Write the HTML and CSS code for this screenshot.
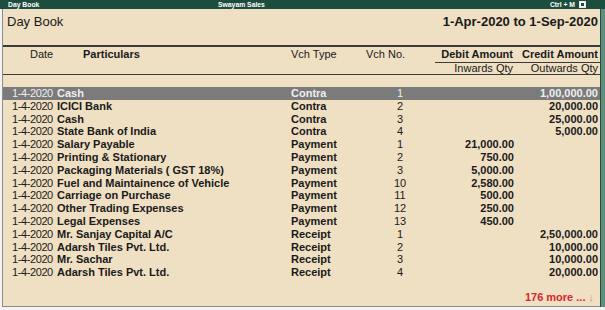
FILE: index.html
```html
<!DOCTYPE html>
<html>
<head>
<meta charset="utf-8">
<link rel="stylesheet" href="styles.css">
</head>
<body>
<div class="titlebar">
  <span class="tb-left">Day Book</span>
  <span class="tb-center">Swayam Sales</span>
  <span class="tb-fill"></span>
  <span class="tb-right">Ctrl + M <span class="tb-box"></span></span>
</div>
<div class="main">
  <div class="panel">
    <div class="heading">
      <span class="h-title">Day Book</span>
      <span class="h-period">1-Apr-2020 to 1-Sep-2020</span>
    </div>
    <div class="colhead">
      <div class="ch ch-date">Date</div>
      <div class="ch ch-part">Particulars</div>
      <div class="ch ch-type">Vch Type</div>
      <div class="ch ch-no">Vch No.</div>
      <div class="ch ch-amt ch-dr">Debit Amount</div>
      <div class="ch ch-amt ch-cr">Credit Amount</div>
      <div class="ch2"></div>
      <div class="ch2"></div>
      <div class="ch2"></div>
      <div class="ch2"></div>
      <div class="ch2 ch2-line ch-dr">Inwards Qty</div>
      <div class="ch2 ch2-line ch-cr">Outwards Qty</div>
    </div>
    <div class="rows">
      <div class="row sel"><span class="c-date">1-4-2020</span><span class="c-part">Cash</span><span class="c-type">Contra</span><span class="c-no">1</span><span class="c-dr"></span><span class="c-cr">1,00,000.00</span></div>
      <div class="row"><span class="c-date">1-4-2020</span><span class="c-part">ICICI Bank</span><span class="c-type">Contra</span><span class="c-no">2</span><span class="c-dr"></span><span class="c-cr">20,000.00</span></div>
      <div class="row"><span class="c-date">1-4-2020</span><span class="c-part">Cash</span><span class="c-type">Contra</span><span class="c-no">3</span><span class="c-dr"></span><span class="c-cr">25,000.00</span></div>
      <div class="row"><span class="c-date">1-4-2020</span><span class="c-part">State Bank of India</span><span class="c-type">Contra</span><span class="c-no">4</span><span class="c-dr"></span><span class="c-cr">5,000.00</span></div>
      <div class="row"><span class="c-date">1-4-2020</span><span class="c-part">Salary Payable</span><span class="c-type">Payment</span><span class="c-no">1</span><span class="c-dr">21,000.00</span><span class="c-cr"></span></div>
      <div class="row"><span class="c-date">1-4-2020</span><span class="c-part">Printing &amp; Stationary</span><span class="c-type">Payment</span><span class="c-no">2</span><span class="c-dr">750.00</span><span class="c-cr"></span></div>
      <div class="row"><span class="c-date">1-4-2020</span><span class="c-part">Packaging Materials ( GST 18%)</span><span class="c-type">Payment</span><span class="c-no">3</span><span class="c-dr">5,000.00</span><span class="c-cr"></span></div>
      <div class="row"><span class="c-date">1-4-2020</span><span class="c-part">Fuel and Maintainence of Vehicle</span><span class="c-type">Payment</span><span class="c-no">10</span><span class="c-dr">2,580.00</span><span class="c-cr"></span></div>
      <div class="row"><span class="c-date">1-4-2020</span><span class="c-part">Carriage on Purchase</span><span class="c-type">Payment</span><span class="c-no">11</span><span class="c-dr">500.00</span><span class="c-cr"></span></div>
      <div class="row"><span class="c-date">1-4-2020</span><span class="c-part">Other Trading Expenses</span><span class="c-type">Payment</span><span class="c-no">12</span><span class="c-dr">250.00</span><span class="c-cr"></span></div>
      <div class="row"><span class="c-date">1-4-2020</span><span class="c-part">Legal Expenses</span><span class="c-type">Payment</span><span class="c-no">13</span><span class="c-dr">450.00</span><span class="c-cr"></span></div>
      <div class="row"><span class="c-date">1-4-2020</span><span class="c-part">Mr. Sanjay Capital A/C</span><span class="c-type">Receipt</span><span class="c-no">1</span><span class="c-dr"></span><span class="c-cr">2,50,000.00</span></div>
      <div class="row"><span class="c-date">1-4-2020</span><span class="c-part">Adarsh Tiles Pvt. Ltd.</span><span class="c-type">Receipt</span><span class="c-no">2</span><span class="c-dr"></span><span class="c-cr">10,000.00</span></div>
      <div class="row"><span class="c-date">1-4-2020</span><span class="c-part">Mr. Sachar</span><span class="c-type">Receipt</span><span class="c-no">3</span><span class="c-dr"></span><span class="c-cr">10,000.00</span></div>
      <div class="row"><span class="c-date">1-4-2020</span><span class="c-part">Adarsh Tiles Pvt. Ltd.</span><span class="c-type">Receipt</span><span class="c-no">4</span><span class="c-dr"></span><span class="c-cr">20,000.00</span></div>
    </div>
    <div class="more">176 more ... <span class="arrow">↓</span></div>
  </div>
  <div class="scroll"></div>
</div>
</body>
</html>
```
FILE: styles.css
```css
html, body {
  margin: 0;
  padding: 0;
  background: #f3f3f3;
  font-family: "Liberation Sans", Arial, sans-serif;
  color: #1a1a1a;
}

.titlebar {
  height: 9px;
  background: #1c4d3e;
  color: #ffffff;
  display: grid;
  grid-template-columns: 218px auto 1fr auto;
  align-items: center;
  font-size: 6.8px;
  font-weight: bold;
  line-height: 9px;
  overflow: hidden;
}
.tb-left { padding-left: 8px; }
.tb-right {
  display: flex;
  align-items: center;
  gap: 4px;
  padding-right: 19px;
}
.tb-box {
  width: 5px;
  height: 5px;
  background: #1c4d3e;
  border: 1px solid #e8e8e8;
  box-shadow: inset 0 0 0 1px #ffffff;
}

.main {
  display: flex;
  height: 298px;
}

.panel {
  flex: 1;
  box-sizing: border-box;
  margin-left: 2px;
  background: #efdfc3;
  border-left: 1px solid #8d8d8d;
  border-bottom: 1px solid #8d8d8d;
  display: flex;
  flex-direction: column;
}

.scroll {
  width: 4px;
  background: #5f8e7c;
  border-left: 1px solid #2c4c42;
}

.heading {
  display: flex;
  justify-content: space-between;
  padding: 5px 2px 16px 4px;
  font-size: 13px;
  line-height: 15px;
  border-bottom: 2px solid #3b3b3b;
}
.h-period { font-weight: bold; }

.colhead {
  display: grid;
  grid-template-columns: 52px 234px 76px 70px 80px 85px;
  grid-template-rows: 15px 12px;
  font-size: 11px;
  border-bottom: 1px solid #3b3b3b;
}
.ch { line-height: 15px; }
.ch2 { line-height: 11px; }
.ch-date { padding-left: 27px; }
.ch-part { padding-left: 28px; font-weight: bold; }
.ch-type { padding-left: 2px; }
.ch-no { padding-left: 1px; }
.ch-amt { font-weight: bold; }
.ch-dr { text-align: right; padding-right: 2px; }
.ch-cr { text-align: right; padding-right: 2px; }
.ch2-line { border-top: 1px solid #3b3b3b; }

.rows {
  margin-top: 12px;
  display: flex;
  flex-direction: column;
}
.row {
  display: grid;
  grid-template-columns: 52px 234px 76px 70px 80px 85px;
  height: 12.8px;
  line-height: 12.8px;
  font-size: 11px;
  font-weight: bold;
  white-space: nowrap;
}
.row.sel {
  background: #7b7b7b;
  color: #eeeeee;
}
.c-date {
  font-weight: normal;
  font-size: 11px;
  letter-spacing: -0.4px;
  padding-left: 9px;
}
.c-part { padding-left: 2px; }
.c-type { padding-left: 2px; }
.c-no { font-weight: normal; text-align: center; padding-left: 0; }
.c-dr { text-align: right; padding-right: 1px; }
.c-cr { text-align: right; padding-right: 2px; }

.more {
  margin-top: 12px;
  text-align: right;
  padding-right: 6px;
  font-size: 11px;
  line-height: 12px;
  font-weight: bold;
  color: #d8262b;
}
.arrow {
  font-weight: normal;
  color: #e38a8a;
}
```
